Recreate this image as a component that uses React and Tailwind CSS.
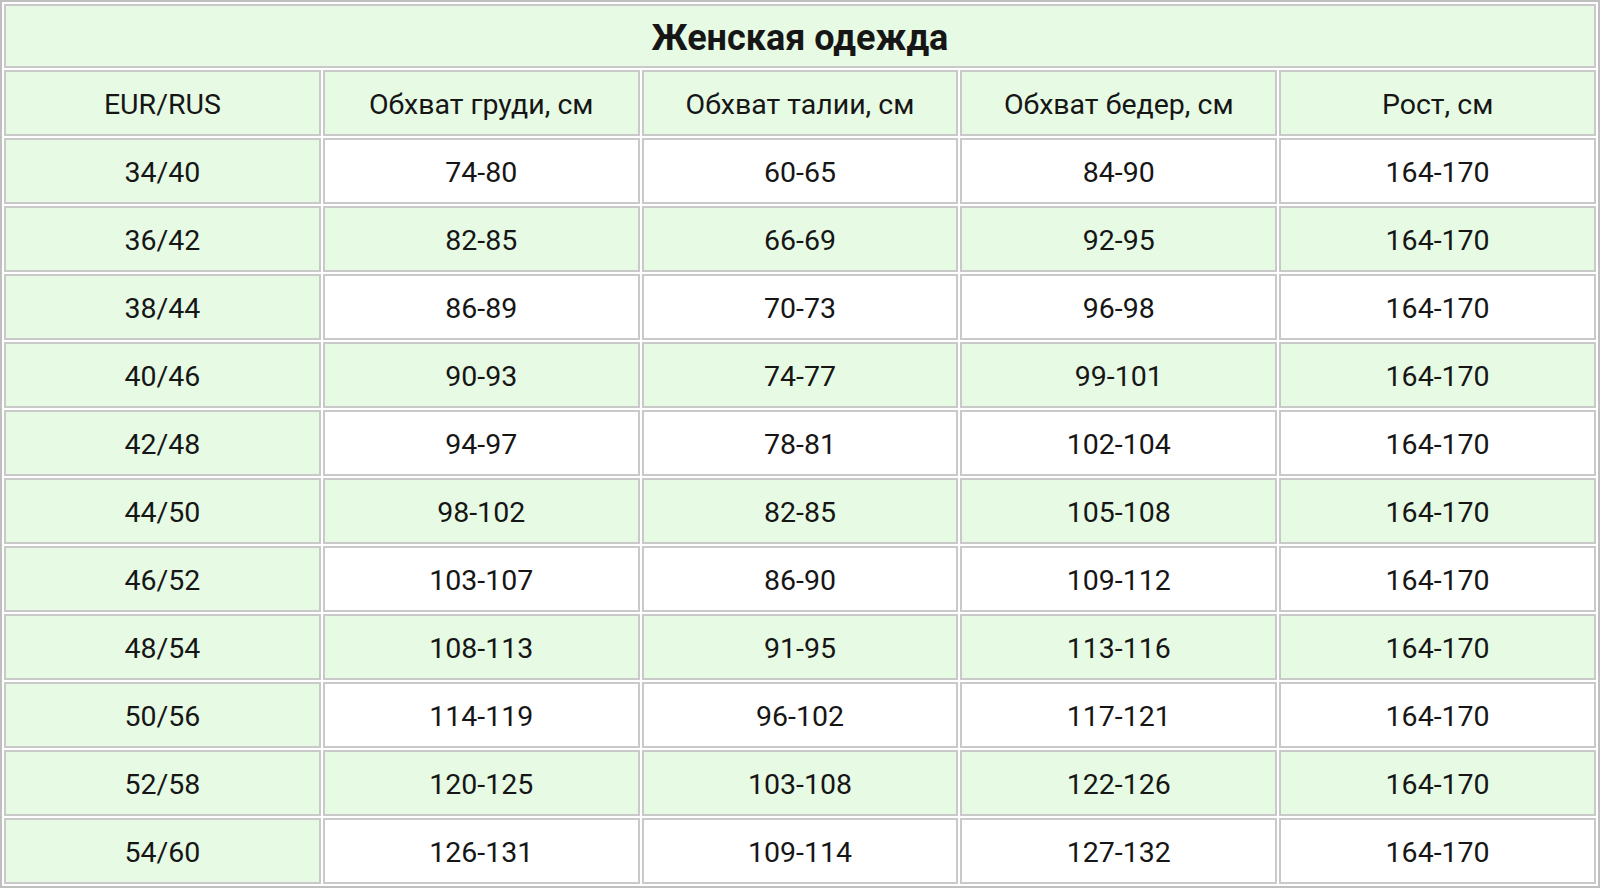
const headers = ['EUR/RUS', 'Обхват груди, см', 'Обхват талии, см', 'Обхват бедер, см', 'Рост, см'];

const rows = [
  ['34/40', '74-80', '60-65', '84-90', '164-170'],
  ['36/42', '82-85', '66-69', '92-95', '164-170'],
  ['38/44', '86-89', '70-73', '96-98', '164-170'],
  ['40/46', '90-93', '74-77', '99-101', '164-170'],
  ['42/48', '94-97', '78-81', '102-104', '164-170'],
  ['44/50', '98-102', '82-85', '105-108', '164-170'],
  ['46/52', '103-107', '86-90', '109-112', '164-170'],
  ['48/54', '108-113', '91-95', '113-116', '164-170'],
  ['50/56', '114-119', '96-102', '117-121', '164-170'],
  ['52/58', '120-125', '103-108', '122-126', '164-170'],
  ['54/60', '126-131', '109-114', '127-132', '164-170'],
];

function App() {
  return (
    <div className="w-[1600px] h-[889px] bg-white font-['Roboto',sans-serif] text-[#161616]">
      <table className="w-full table-fixed border-separate border-spacing-[2px] border-2 border-[#bfbfbf]">
        <tbody>
          <tr>
            <td colSpan={5} className="h-[64px] pt-[4px] border-2 border-[#c9c9c9] bg-[#e6fae4] text-center text-[36px] leading-none font-bold">
              Женская одежда
            </td>
          </tr>
          <tr>
            {headers.map((h) => (
              <td key={h} className="h-[66px] pt-[4px] border-2 border-[#c9c9c9] bg-[#e6fae4] text-center text-[28.5px] leading-none">
                {h}
              </td>
            ))}
          </tr>
          {rows.map((row, i) => (
            <tr key={row[0]}>
              {row.map((cell, j) => (
                <td
                  key={j}
                  className={
                    'h-[66px] pt-[4px] border-2 border-[#c9c9c9] text-center text-[28.5px] leading-none ' +
                    (j === 0 || i % 2 === 1 ? 'bg-[#e6fae4]' : 'bg-white')
                  }
                >
                  {cell}
                </td>
              ))}
            </tr>
          ))}
        </tbody>
      </table>
    </div>
  );
}

export default App;
